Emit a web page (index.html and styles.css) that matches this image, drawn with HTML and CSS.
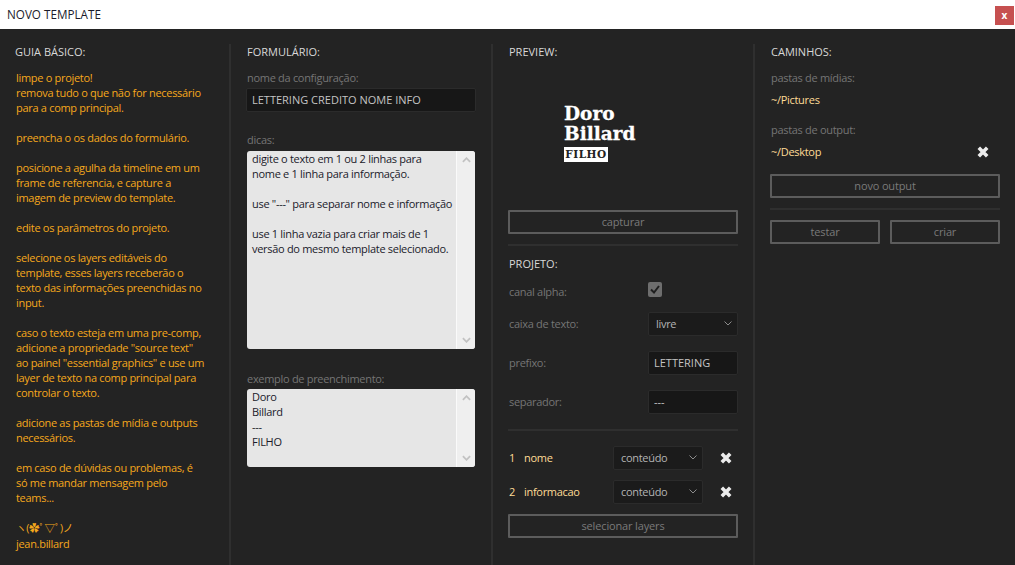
FILE: index.html
```html
<!DOCTYPE html>
<html lang="pt-BR">
<head>
  <meta charset="UTF-8">
  <title>Novo Template</title>
  <link rel="stylesheet" href="styles.css">
</head>
<body>
  <header class="titlebar">
    <span class="title">NOVO TEMPLATE</span>
    <button class="close">x</button>
  </header>

  <main class="columns">
    <section class="col">
      <h2 class="heading guide-heading">GUIA BÁSICO:</h2>
      <div class="guide">
        <p>limpe o projeto!<br>remova tudo o que não for necessário<br>para a comp principal.</p>
        <p>preencha o os dados do formulário.</p>
        <p>posicione a agulha da timeline em um<br>frame de referencia, e capture a<br>imagem de preview do template.</p>
        <p>edite os parâmetros do projeto.</p>
        <p>selecione os layers editáveis do<br>template, esses layers receberão o<br>texto das informações preenchidas no<br>input.</p>
        <p>caso o texto esteja em uma pre-comp,<br>adicione a propriedade "source text"<br>ao painel "essential graphics" e use um<br>layer de texto na comp principal para<br>controlar o texto.</p>
        <p>adicione as pastas de mídia e outputs<br>necessários.</p>
        <p>em caso de dúvidas ou problemas, é<br>só me mandar mensagem pelo<br>teams...</p>
        <p><span class="kaomoji">ヽ(✿ﾟ▽ﾟ)ノ</span>jean.billard</p>
      </div>
    </section>

    <section class="col">
      <h2 class="heading">FORMULÁRIO:</h2>
      <label class="label first">nome da configuração:</label>
      <input class="field name-field" type="text" value="LETTERING CREDITO NOME INFO">

      <label class="label tips-label">dicas:</label>
      <div class="textbox tips">
        <div class="textbox-text">digite o texto em 1 ou 2 linhas para<br>nome e 1 linha para informação.<br><br>use "---" para separar nome e informação<br><br>use 1 linha vazia para criar mais de 1<br>versão do mesmo template selecionado.</div>
        <div class="scrollbar">
          <svg class="arrow" viewBox="0 0 10 6"><path d="M1 5l4-4 4 4"/></svg>
          <svg class="arrow" viewBox="0 0 10 6"><path d="M1 1l4 4 4-4"/></svg>
        </div>
      </div>

      <label class="label sample-label">exemplo de preenchimento:</label>
      <div class="textbox sample">
        <div class="textbox-text">Doro<br>Billard<br>---<br>FILHO</div>
        <div class="scrollbar">
          <svg class="arrow" viewBox="0 0 10 6"><path d="M1 5l4-4 4 4"/></svg>
          <svg class="arrow" viewBox="0 0 10 6"><path d="M1 1l4 4 4-4"/></svg>
        </div>
      </div>
    </section>

    <section class="col">
      <h2 class="heading">PREVIEW:</h2>
      <div class="preview">
        <div class="logo">
          <div class="logo-name">Doro<br>Billard</div>
          <div class="logo-tag">FILHO</div>
        </div>
      </div>
      <button class="btn">capturar</button>
      <hr class="rule">

      <h2 class="heading project">PROJETO:</h2>
      <div class="row alpha-row">
        <span class="row-label">canal alpha:</span>
        <span class="checkbox"><svg viewBox="0 0 14 14"><path d="M3 7.5l3 3 5-6.5"/></svg></span>
      </div>
      <div class="row text-case-row">
        <span class="row-label">caixa de texto:</span>
        <div class="select small">
          <span>livre</span>
          <svg class="chevron" viewBox="0 0 8 5"><path d="M.5 .5L4 4 7.5 .5"/></svg>
        </div>
      </div>
      <div class="row">
        <span class="row-label">prefixo:</span>
        <input class="field small" type="text" value="LETTERING">
      </div>
      <div class="row">
        <span class="row-label">separador:</span>
        <input class="field small" type="text" value="---">
      </div>
      <hr class="rule layers-rule">

      <div class="layer">
        <span class="layer-num">1</span>
        <span class="layer-name">nome</span>
        <div class="select small">
          <span>conteúdo</span>
          <svg class="chevron" viewBox="0 0 8 5"><path d="M.5 .5L4 4 7.5 .5"/></svg>
        </div>
        <svg class="remove" viewBox="0 0 10 10"><path d="M1.5 1.5l7 7M8.5 1.5l-7 7"/></svg>
      </div>
      <div class="layer">
        <span class="layer-num">2</span>
        <span class="layer-name">informacao</span>
        <div class="select small">
          <span>conteúdo</span>
          <svg class="chevron" viewBox="0 0 8 5"><path d="M.5 .5L4 4 7.5 .5"/></svg>
        </div>
        <svg class="remove" viewBox="0 0 10 10"><path d="M1.5 1.5l7 7M8.5 1.5l-7 7"/></svg>
      </div>
      <button class="btn">selecionar layers</button>
    </section>

    <section class="col last">
      <h2 class="heading">CAMINHOS:</h2>
      <label class="label first">pastas de mídias:</label>
      <div class="path">~/Pictures</div>
      <label class="label output-label">pastas de output:</label>
      <div class="path">
        <span>~/Desktop</span>
        <svg class="remove" viewBox="0 0 10 10"><path d="M1.5 1.5l7 7M8.5 1.5l-7 7"/></svg>
      </div>
      <button class="btn new-output">novo output</button>
      <hr class="rule">
      <div class="actions">
        <button class="btn">testar</button>
        <button class="btn">criar</button>
      </div>
    </section>
  </main>
</body>
</html>
```

FILE: styles.css
```css
* { box-sizing: border-box; }
html, body { height: 100%; }
body { margin: 0; background: #232323; color: #d8d8d8; font-family: "Open Sans", "Noto Sans CJK JP", sans-serif; font-size: 11px; line-height: 15px; letter-spacing: -.3px; overflow: hidden; }

.titlebar { height: 29px; background: #fff; display: flex; align-items: center; justify-content: space-between; padding: 0 1px 0 7px; color: #1a1a2a; font-size: 11.7px; letter-spacing: 0; }
.close { width: 19px; height: 19px; border: none; padding: 0; margin-top: 2px; background: #c65050; color: #fff; font: bold 10px/17px "Open Sans", sans-serif; }

.columns { display: grid; grid-template-columns: 231px 262px 262px 260px; padding: 15px 0 12px; height: 536px; }
.col { padding: 0 15px; border-right: 2px solid #2f2f2f; }
.col.last { border-right: none; }

.heading { margin: 0 0 0 1px; font-size: 11px; font-weight: normal; line-height: 15px; letter-spacing: 0; color: #d8d8d8; }
.guide-heading { margin-left: 0; }

.guide { margin: 11px 0 0 1px; color: #f5a81c; white-space: nowrap; }
.guide p { margin: 0 0 15px; }
.kaomoji { display: block; font-size: 10.5px; line-height: 16px; }

.label { display: block; margin-left: 1px; color: #757575; }
.label.first { margin-top: 11px; }
.tips-label { margin-top: 20px; }
.sample-label { margin-top: 22px; }
.output-label { margin-top: 15px; }

.field { height: 24px; padding: 0 5px 2px; border: 1px solid #2b2b2b; border-radius: 2px; background: #171717; color: #c4c4c4; font: inherit; letter-spacing: 0; outline: none; }
.name-field { display: block; width: 230px; margin-top: 3px; }

.textbox { display: flex; margin: 3px 1px 0; border-radius: 3px; background: #e6e6e6; color: #1a1a2a; overflow: hidden; }
.tips { height: 198px; margin-top: 4px; }
.sample { height: 78px; }
.textbox-text { flex: 1; min-width: 0; padding: 0 0 0 5px; white-space: nowrap; }
.scrollbar { flex: none; width: 19px; display: flex; flex-direction: column; justify-content: space-between; align-items: center; padding: 6px 0; border-left: 1px solid #fafafa; background: #efefef; }
.arrow { width: 9px; height: 6px; fill: none; stroke: #c2c2c2; stroke-width: 2; }

.preview { height: 151px; padding: 45px 0 0 56px; }
.logo { color: #fff; font-family: "DejaVu Serif", serif; font-weight: bold; letter-spacing: 0; }
.logo-name { font-size: 18.5px; line-height: 20px; -webkit-text-stroke: .3px #fff; }
.logo-tag { width: 44px; height: 15px; margin-top: 3px; background: #fff; color: #232323; font-size: 10.5px; line-height: 15px; letter-spacing: .5px; text-align: center; }

.btn { display: block; width: 100%; height: 24px; padding: 0 0 2px; border: 2px solid #5c5c5c; border-radius: 1px; background: transparent; color: #7a7a7a; font: inherit; letter-spacing: -.15px; }
.rule { height: 2px; margin: 10px 0; border: none; background: #2f2f2f; }

.project { margin-top: 10px; }
.row { display: flex; align-items: center; justify-content: space-between; height: 24px; margin-top: 15px; color: #757575; }
.row-label { margin: 0 0 2px 1px; }
.alpha-row { margin-top: 8px; }
.alpha-row .row-label { margin-bottom: 0; }
.text-case-row { margin-top: 9px; }

.checkbox { width: 14px; height: 15px; margin-right: 76px; margin-top: -4px; border-radius: 2px; background: #6e6e6e; }
.checkbox svg { display: block; width: 14px; height: 14px; fill: none; stroke: #1f1f1f; stroke-width: 2; }

.small { width: 90px; flex: none; }
.select { height: 24px; display: flex; align-items: center; justify-content: space-between; padding: 0 5px 2px 7px; border: 1px solid #2b2b2b; border-radius: 2px; background: #1b1b1b; color: #b4b4b4; }
.chevron { width: 8px; height: 5px; fill: none; stroke: #8c8c8c; stroke-width: 1; }

.layers-rule { margin: 15px 0; }
.layer { display: flex; align-items: center; height: 24px; margin-bottom: 10px; color: #ffdc96; }
.layer-num { width: 15px; margin: 0 0 2px 1px; }
.layer-name { width: 89px; margin-bottom: 2px; }
.remove { width: 12px; height: 12px; fill: none; stroke: #ececec; stroke-width: 3; }
.layer .remove { margin-left: 17px; }

.path { display: flex; align-items: center; justify-content: space-between; height: 15px; margin: 7px 0 0 1px; padding-right: 11px; color: #ffdc96; }
.new-output { margin-top: 15px; }
.actions { display: flex; gap: 10px; }
```
